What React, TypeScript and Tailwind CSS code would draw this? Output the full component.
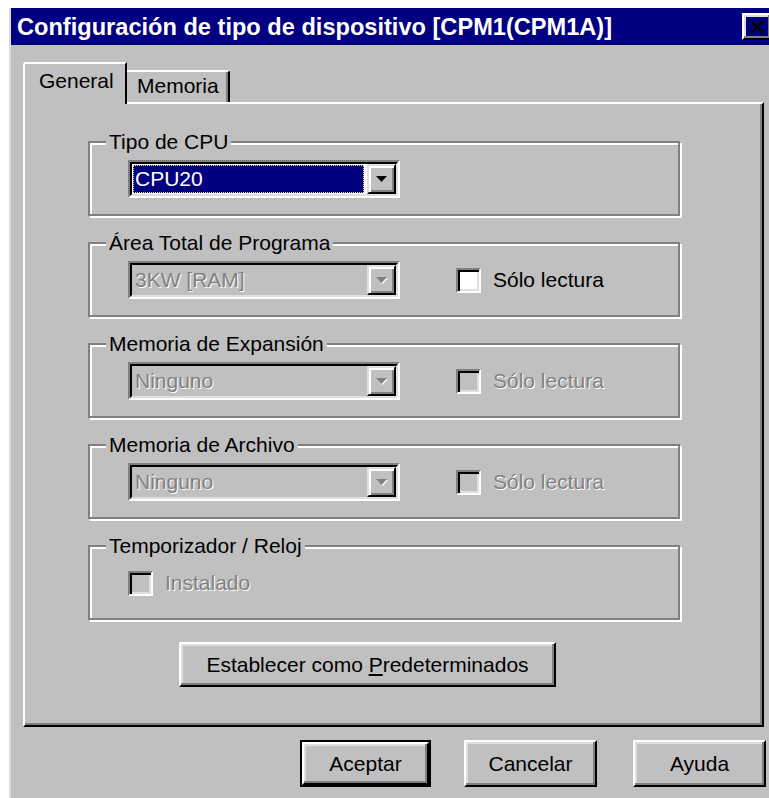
import React from 'react';

// Win95-style "device type" dialog (Spanish UI)

const dimText = 'text-[#808080] [text-shadow:1px_1px_0_#fff]';

function Arrow({ disabled }: { disabled?: boolean }) {
  return (
    <svg width="11" height="6" viewBox="0 0 11 6" className={disabled ? '[filter:drop-shadow(1px_1px_0_#fff)]' : ''}>
      <path d="M0 0h11L5.5 6z" fill={disabled ? '#808080' : '#000'} />
    </svg>
  );
}

function Combo({ value, focused, disabled }: { value: string; focused?: boolean; disabled?: boolean }) {
  return (
    <div className="flex h-[38px] w-[272px] border-2 border-t-[#808080] border-l-[#808080] border-b-white border-r-white">
      <div
        className={`flex flex-1 border-2 border-t-black border-l-black border-b-[#dfdfdf] border-r-[#dfdfdf] ${
          disabled ? 'bg-[#c0c0c0]' : 'bg-white'
        }`}
      >
        <div className="flex flex-1 items-stretch py-[1px] pl-[1px] pr-[3px]">
          {focused ? (
            <div className="flex flex-1 items-center border border-dotted border-[#e8e890] bg-[#000080] pl-[1px] text-white">
              {value}
            </div>
          ) : (
            <div className={`flex flex-1 items-center pl-[2px] ${disabled ? dimText : ''}`}>{value}</div>
          )}
        </div>
        <div className="flex w-[29px] items-center justify-center border-2 border-t-[#dfdfdf] border-l-[#dfdfdf] border-b-black border-r-black bg-[#c0c0c0] shadow-[inset_2px_2px_0_#fff,inset_-2px_-2px_0_#808080]">
          <Arrow disabled={disabled} />
        </div>
      </div>
    </div>
  );
}

function Check({ label, disabled }: { label: string; disabled?: boolean }) {
  return (
    <div className="flex items-center gap-[12px]">
      <div
        className={`h-[25px] w-[25px] border-2 border-t-[#808080] border-l-[#808080] border-b-white border-r-white shadow-[inset_2px_2px_0_#000,inset_-2px_-2px_0_#dfdfdf] ${
          disabled ? 'bg-[#c0c0c0]' : 'bg-white'
        }`}
      />
      <span className={disabled ? dimText : ''}>{label}</span>
    </div>
  );
}

function Group({ title, children }: { title: string; children: React.ReactNode }) {
  return (
    <fieldset className="h-[86px] w-[592px] border-2 border-[#808080] pt-[6px] shadow-[inset_2px_2px_0_#fff,2px_2px_0_#fff]">
      <legend className="ml-[16px] bg-[#c0c0c0] px-[3px] leading-[24px]">{title}</legend>
      <div className="flex h-[38px] items-center pl-[38px]">{children}</div>
    </fieldset>
  );
}

function Face({ children }: { children: React.ReactNode }) {
  return (
    <div className="flex h-full w-full items-center justify-center border-2 border-t-white border-l-white border-b-black border-r-black shadow-[inset_-2px_-2px_0_#808080,inset_2px_2px_0_#dfdfdf]">
      {children}
    </div>
  );
}

export default function App() {
  return (
    <div className="h-[798px] w-[769px] overflow-hidden bg-white font-['Liberation_Sans',Arial,sans-serif] text-[21px] leading-[24px] text-black">
      <div className="ml-[9px] mt-[8px] h-[800px] w-[764px] border-l-2 border-[#dcdcdc] bg-[#c0c0c0]">
        {/* caption */}
        <div className="flex h-[37px] items-center bg-[#000080] pl-[6px] pr-[1px]">
          <span className="text-[23.6px] font-bold text-white">Configuración de tipo de dispositivo [CPM1(CPM1A)]</span>
          <div className="ml-auto h-[27px] w-[30px]">
            <Face>
              <svg width="16" height="14" viewBox="0 0 16 14">
                <path d="M2 1l12 12M14 1L2 13" stroke="#000" strokeWidth="2.6" />
              </svg>
            </Face>
          </div>
        </div>

        {/* tabs */}
        <div className="ml-[12px] mt-[17px] flex h-[40px] items-end">
          <div className="relative z-10 h-[42px] w-[104px] self-start rounded-tl-[3px] border-l-2 border-t-2 border-r-2 border-l-white border-t-white border-r-black bg-[#c0c0c0] pl-[14px] pt-[5px]">
            General
          </div>
          <div className="h-[32px] w-[103px] rounded-tr-[3px] border-t-2 border-r-2 border-t-white border-r-black pl-[10px] pt-[2px] shadow-[inset_-2px_0_0_#808080]">
            Memoria
          </div>
        </div>

        {/* tab page */}
        <div className="ml-[12px] h-[625px] w-[741px] border-2 border-t-white border-l-white border-b-black border-r-black pl-[63px] pt-[26px] shadow-[inset_-2px_-2px_0_#808080]">
          <div className="flex flex-col gap-[15px]">
            <Group title="Tipo de CPU">
              <Combo value="CPU20" focused />
            </Group>
            <Group title="Área Total de Programa">
              <Combo value="3KW [RAM]" disabled />
              <div className="ml-[56px]">
                <Check label="Sólo lectura" />
              </div>
            </Group>
            <Group title="Memoria de Expansión">
              <Combo value="Ninguno" disabled />
              <div className="ml-[56px]">
                <Check label="Sólo lectura" disabled />
              </div>
            </Group>
            <Group title="Memoria de Archivo">
              <Combo value="Ninguno" disabled />
              <div className="ml-[56px]">
                <Check label="Sólo lectura" disabled />
              </div>
            </Group>
            <Group title="Temporizador / Reloj">
              <Check label="Instalado" disabled />
            </Group>
          </div>

          <div className="ml-[91px] mt-[22px] h-[45px] w-[377px]">
            <Face>
              <span>
                Establecer como <span className="underline underline-offset-2">P</span>redeterminados
              </span>
            </Face>
          </div>
        </div>

        {/* dialog buttons */}
        <div className="ml-[289px] mt-[13px] flex h-[47px] gap-[33px]">
          <div className="h-full w-[131px] border-2 border-black">
            <Face>Aceptar</Face>
          </div>
          <div className="h-full w-[133px]">
            <Face>Cancelar</Face>
          </div>
          <div className="ml-[3px] h-full w-[133px]">
            <Face>Ayuda</Face>
          </div>
        </div>
      </div>
    </div>
  );
}
